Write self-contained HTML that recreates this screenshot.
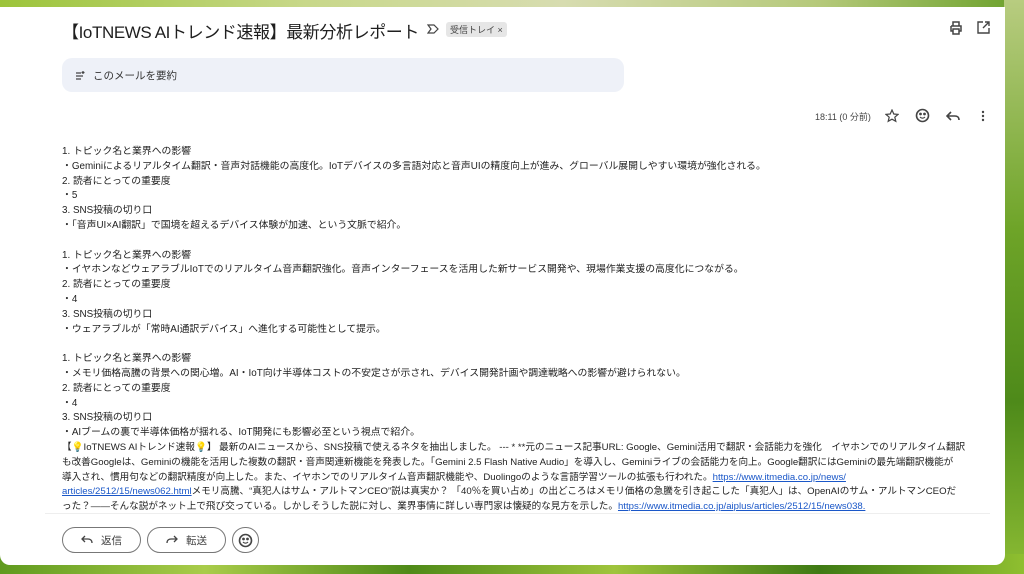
<!DOCTYPE html>
<html><head><meta charset="utf-8"><style>
*{margin:0;padding:0;box-sizing:border-box}
body{width:1024px;height:574px;overflow:hidden;position:relative;font-family:"Liberation Sans","Noto Sans CJK JP",sans-serif;color:#222;
background:linear-gradient(90deg,#9cc43a 0%,#c8d88a 30%,#d7dcb0 55%,#b5c97a 80%,#6aa02a 100%);}
.bot{position:absolute;left:0;right:0;bottom:0;height:20px;background:linear-gradient(90deg,#5f9a1e,#a9cc4a 20%,#4f8a18 40%,#9fc43c 60%,#3f7a14 80%,#8fbf30)}
.rt{position:absolute;right:0;top:0;bottom:0;width:20px;background:linear-gradient(180deg,#b8cc80,#6ea428 40%,#4e8a1a 70%,#8cbc34)}
.panel{position:absolute;left:0;top:7px;width:1005px;height:558px;background:#fff;border-radius:0 0 10px 10px}
.title{position:absolute;left:62px;top:18px;font-size:17px;letter-spacing:-0.4px;color:#1f1f1f;white-space:nowrap}
.tag{position:absolute;left:446px;top:22px;font-size:9px;background:#e6e6e6;color:#444;padding:1px 4px;border-radius:3px}
.sum{position:absolute;left:62px;top:58px;width:562px;height:34px;background:#eef1f8;border-radius:10px;font-size:10.5px;color:#333;padding:10px 0 0 31px}
.time{position:absolute;left:815px;top:110px;font-size:9px;color:#444}
.body{position:absolute;left:62px;top:145px;font-size:9.85px;line-height:14.8px;color:#222;white-space:nowrap}
a{color:#1a57c8;text-decoration:underline}
.hr{position:absolute;left:45px;top:513px;width:945px;height:1px;background:#eee}
.btn{position:absolute;top:527px;height:26px;border:1px solid #777;border-radius:13px;font-size:10.5px;color:#444;padding:5px 0 0 38px}
.ic{position:absolute;fill:none;stroke:#444;stroke-width:1.6}
</style></head><body>
<div class="rt"></div><div class="bot"></div>
<div class="panel"></div>
<div class="title">【IoTNEWS AIトレンド速報】最新分析レポート</div>
<svg class="ic" style="left:427px;top:24px" width="12" height="10" viewBox="0 0 12 10"><path d="M1 1h6l4 4-4 4H1l3-4z" stroke-width="1.2"/></svg>
<div class="tag">受信トレイ ×</div>
<svg class="ic" style="left:949px;top:21px" width="14" height="14" viewBox="0 0 14 14"><path d="M4 5V1h6v4M2 5h10v5h-2M4 10H2V5M4 8h6v5H4z" stroke-width="1.5"/></svg>
<svg class="ic" style="left:977px;top:21px" width="13" height="13" viewBox="0 0 13 13"><path d="M6 1H1v11h11V7M8 1h4v4M12 1L6 7" stroke-width="1.4"/></svg>
<div class="sum"><svg class="ic" style="left:13px;top:12px" width="11" height="10" viewBox="0 0 11 10"><path d="M1 3h5M1 6h7M1 9h5M8 1v3M6.5 2.5h3" stroke-width="1.2"/></svg>このメールを要約</div>
<div class="time">18:11 (0 分前)</div>
<svg class="ic" style="left:885px;top:109px" width="14" height="14" viewBox="0 0 14 14"><path d="M7 1l1.8 4 4.2.4-3.2 2.8 1 4.1L7 10.2 3.2 12.3l1-4.1L1 5.4l4.2-.4z" stroke-width="1.2"/></svg>
<svg class="ic" style="left:915px;top:108px" width="15" height="15" viewBox="0 0 15 15"><circle cx="7.5" cy="7.5" r="6"/><path d="M5 9c1.5 1.5 3.5 1.5 5 0" stroke-width="1.2"/><circle cx="5.5" cy="6" r=".6" fill="#444"/><circle cx="9.5" cy="6" r=".6" fill="#444"/></svg>
<svg class="ic" style="left:946px;top:110px" width="14" height="12" viewBox="0 0 14 12"><path d="M5 2L1 6l4 4M1 6h8c2 0 4 1 4 4"/></svg>
<svg style="position:absolute;left:981px;top:110px" width="4" height="12"><circle cx="2" cy="2" r="1.2" fill="#444"/><circle cx="2" cy="6" r="1.2" fill="#444"/><circle cx="2" cy="10" r="1.2" fill="#444"/></svg>
<div class="body">1. トピック名と業界への影響<br>・Geminiによるリアルタイム翻訳・音声対話機能の高度化。IoTデバイスの多言語対応と音声UIの精度向上が進み、グローバル展開しやすい環境が強化される。<br>2. 読者にとっての重要度<br>・5<br>3. SNS投稿の切り口<br>・「音声UI×AI翻訳」で国境を超えるデバイス体験が加速、という文脈で紹介。<br><br>1. トピック名と業界への影響<br>・イヤホンなどウェアラブルIoTでのリアルタイム音声翻訳強化。音声インターフェースを活用した新サービス開発や、現場作業支援の高度化につながる。<br>2. 読者にとっての重要度<br>・4<br>3. SNS投稿の切り口<br>・ウェアラブルが「常時AI通訳デバイス」へ進化する可能性として提示。<br><br>1. トピック名と業界への影響<br>・メモリ価格高騰の背景への関心増。AI・IoT向け半導体コストの不安定さが示され、デバイス開発計画や調達戦略への影響が避けられない。<br>2. 読者にとっての重要度<br>・4<br>3. SNS投稿の切り口<br>・AIブームの裏で半導体価格が揺れる、IoT開発にも影響必至という視点で紹介。<br><span style="font-size:9.6px">【💡IoTNEWS AIトレンド速報💡】 最新のAIニュースから、SNS投稿で使えるネタを抽出しました。 --- * **元のニュース記事URL: Google、Gemini活用で翻訳・会話能力を強化　イヤホンでのリアルタイム翻訳<br>も改善Googleは、Geminiの機能を活用した複数の翻訳・音声関連新機能を発表した。「Gemini 2.5 Flash Native Audio」を導入し、Geminiライブの会話能力を向上。Google翻訳にはGeminiの最先端翻訳機能が<br>導入され、慣用句などの翻訳精度が向上した。また、イヤホンでのリアルタイム音声翻訳機能や、Duolingoのような言語学習ツールの拡張も行われた。<a>https://www.itmedia.co.jp/news/</a><br><a>articles/2512/15/news062.html</a>メモリ高騰、“真犯人はサム・アルトマンCEO”説は真実か？ 「40％を買い占め」の出どころはメモリ価格の急騰を引き起こした「真犯人」は、OpenAIのサム・アルトマンCEOだ<br>った？――そんな説がネット上で飛び交っている。しかしそうした説に対し、業界事情に詳しい専門家は懐疑的な見方を示した。<a>https://www.itmedia.co.jp/aiplus/articles/2512/15/news038.</a></span></div>
<div class="hr"></div>
<div class="btn" style="left:62px;width:79px">返信<svg class="ic" style="left:18px;top:7px" width="12" height="10" viewBox="0 0 12 10"><path d="M4 1L1 4l3 3M1 4h6c2 0 4 1 4 4" stroke-width="1.3"/></svg></div>
<div class="btn" style="left:147px;width:79px">転送<svg class="ic" style="left:18px;top:7px" width="12" height="10" viewBox="0 0 12 10"><path d="M8 1l3 3-3 3M11 4H5C3 4 1 5 1 8" stroke-width="1.3"/></svg></div>
<div class="btn" style="left:232px;width:27px;padding:0"><svg class="ic" style="left:5px;top:5px" width="15" height="15" viewBox="0 0 15 15"><circle cx="7.5" cy="7.5" r="6"/><path d="M5 9c1.5 1.5 3.5 1.5 5 0" stroke-width="1.2"/><circle cx="5.5" cy="6" r=".6" fill="#444"/><circle cx="9.5" cy="6" r=".6" fill="#444"/></svg></div>
</body></html>
